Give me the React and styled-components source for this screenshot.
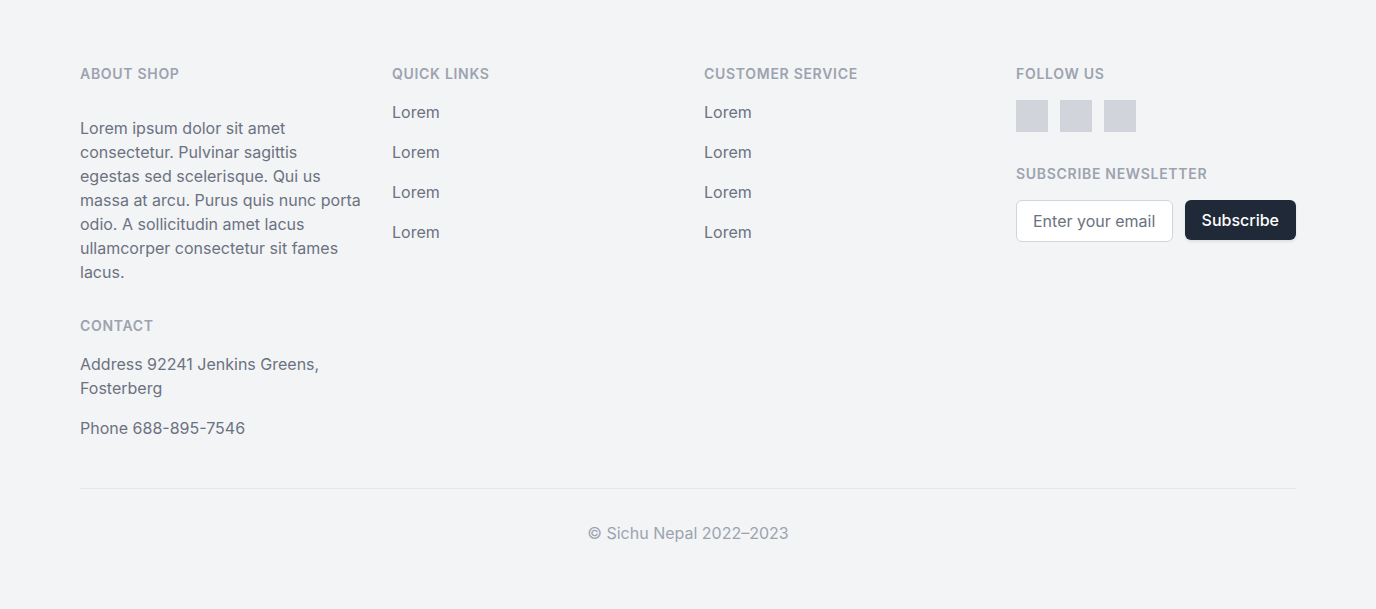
import React from "react";
import styled, { createGlobalStyle } from "styled-components";

const GlobalStyle = createGlobalStyle`
  *, *::before, *::after { box-sizing: border-box; }
  body {
    margin: 0;
    background: #f3f4f6;
    font-family: Inter, "Liberation Sans", sans-serif;
    font-size: 16px;
    line-height: 24px;
    color: #6b7280;
  }
`;

const Footer = styled.footer`
  min-height: 100vh;
  padding: 64px 32px;
  background: #f3f4f6;
`;

const Container = styled.div`
  max-width: 1216px;
  margin: 0 auto;
`;

const Columns = styled.div`
  display: grid;
  grid-template-columns: repeat(4, minmax(0, 1fr));
  gap: 32px;

  @media (max-width: 1200px) {
    grid-template-columns: minmax(0, 1fr);
  }
`;

const Column = styled.div`
  display: flex;
  flex-direction: column;
  gap: 32px;
`;

const Heading = styled.h3`
  display: block;
  margin: 0;
  color: #9ca3af;
  font-size: 14px;
  line-height: 20px;
  font-weight: 600;
  letter-spacing: 0.05em;
  text-transform: uppercase;
`;

/* Line breaks in the copy are kept as written. */
const Paragraph = styled.p`
  margin: 0;
  white-space: pre;
`;

const List = styled.ul`
  list-style: none;
  margin: 16px 0 0;
  padding: 0;
  display: flex;
  flex-direction: column;
  gap: 16px;
`;

const Link = styled.a`
  color: inherit;
  text-decoration: none;

  &:hover { color: #111827; }
`;

const Socials = styled.div`
  display: flex;
  gap: 12px;
  margin-top: 16px;
`;

const SocialLink = styled.a`
  width: 32px;
  height: 32px;
  background: #d1d5db;
`;

const Form = styled.form`
  display: flex;
  align-items: flex-start;
  gap: 12px;
  margin-top: 16px;
`;

const EmailInput = styled.input`
  flex: 1;
  min-width: 0;
  padding: 8px 16px;
  border: 1px solid #d1d5db;
  border-radius: 6px;
  background: #fff;
  color: #111827;
  font: inherit;

  &::placeholder { color: #6b7280; opacity: 1; }
`;

const SubscribeButton = styled.button`
  padding: 8px 17px;
  border: 0;
  border-radius: 6px;
  background: #1f2937;
  color: #fff;
  font: inherit;
  font-weight: 500;
  box-shadow: 0 2px 3px rgba(0, 0, 0, 0.08);
  cursor: pointer;
`;

const Copyright = styled.div`
  margin-top: 48px;
  padding-top: 32px;
  border-top: 1px solid #e5e7eb;
  color: #9ca3af;
  text-align: center;
`;

const about = [
  "Lorem ipsum dolor sit amet",
  "consectetur. Pulvinar sagittis",
  "egestas sed scelerisque. Qui us",
  "massa at arcu. Purus quis nunc porta",
  "odio. A sollicitudin amet lacus",
  "ullamcorper consectetur sit fames",
  "lacus.",
].join("\n");
const links = ["Lorem", "Lorem", "Lorem", "Lorem"];
const socials = ["Facebook", "Instagram", "Twitter"];

function LinkColumn({ title }) {
  return (
    <nav aria-label={title}>
      <Heading>{title}</Heading>
      <List>
        {links.map((label, i) => (
          <li key={i}><Link href="#">{label}</Link></li>
        ))}
      </List>
    </nav>
  );
}

export default function App() {
  return (
    <>
      <GlobalStyle />
      <Footer>
        <Container>
          <Columns>
            <Column>
              <Column>
                <Heading>About shop</Heading>
                <Paragraph>{about}</Paragraph>
              </Column>
              <div>
                <Heading>Contact</Heading>
                <List>
                  <li>Address 92241 Jenkins Greens, Fosterberg</li>
                  <li>Phone 688-895-7546</li>
                </List>
              </div>
            </Column>
            <LinkColumn title="Quick links" />
            <LinkColumn title="Customer service" />
            <Column>
              <div>
                <Heading>Follow us</Heading>
                <Socials>
                  {socials.map((name) => (
                    <SocialLink key={name} href="#" aria-label={name} />
                  ))}
                </Socials>
              </div>
              <div>
                <Heading as="label" htmlFor="email">Subscribe newsletter</Heading>
                <Form onSubmit={(e) => e.preventDefault()}>
                  <EmailInput id="email" type="email" placeholder="Enter your email" />
                  <SubscribeButton type="submit">Subscribe</SubscribeButton>
                </Form>
              </div>
            </Column>
          </Columns>
          <Copyright>© Sichu Nepal 2022–2023</Copyright>
        </Container>
      </Footer>
    </>
  );
}
